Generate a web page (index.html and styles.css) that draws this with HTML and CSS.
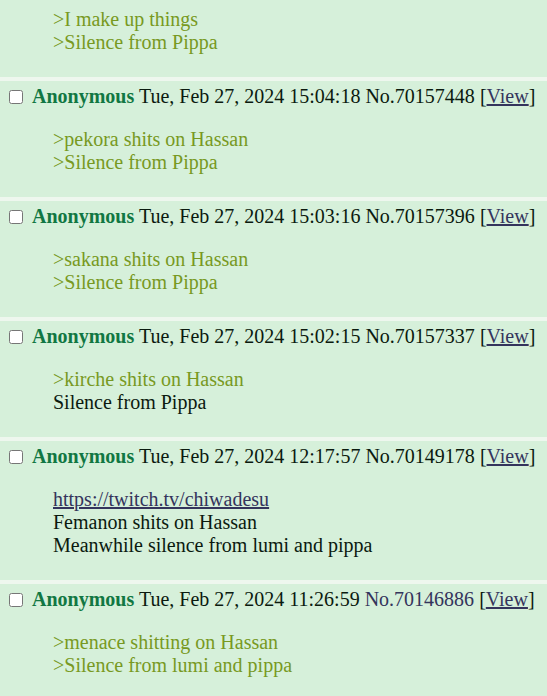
FILE: index.html
```html
<!DOCTYPE html>
<html lang="en">
<head>
  <meta charset="UTF-8">
  <title>Thread</title>
  <link rel="stylesheet" href="styles.css">
</head>
<body>
  <div class="thread">
    <!-- top post, cut off -->
    <div class="post post-first">
      <blockquote class="text">
        <span class="quote">&gt;I make up things</span><br>
        <span class="quote">&gt;Silence from Pippa</span>
      </blockquote>
    </div>

    <div class="post">
      <div class="post-info">
        <input type="checkbox">
        <span class="name">Anonymous</span> <span class="date">Tue, Feb 27, 2024 15:04:18</span> <span class="num">No.70157448</span> [<a href="#">View</a>]
      </div>
      <blockquote class="text">
        <span class="quote">&gt;pekora shits on Hassan</span><br>
        <span class="quote">&gt;Silence from Pippa</span>
      </blockquote>
    </div>

    <div class="post">
      <div class="post-info">
        <input type="checkbox">
        <span class="name">Anonymous</span> <span class="date">Tue, Feb 27, 2024 15:03:16</span> <span class="num">No.70157396</span> [<a href="#">View</a>]
      </div>
      <blockquote class="text">
        <span class="quote">&gt;sakana shits on Hassan</span><br>
        <span class="quote">&gt;Silence from Pippa</span>
      </blockquote>
    </div>

    <div class="post">
      <div class="post-info">
        <input type="checkbox">
        <span class="name">Anonymous</span> <span class="date">Tue, Feb 27, 2024 15:02:15</span> <span class="num">No.70157337</span> [<a href="#">View</a>]
      </div>
      <blockquote class="text">
        <span class="quote">&gt;kirche shits on Hassan</span><br>
        Silence from Pippa
      </blockquote>
    </div>

    <div class="post">
      <div class="post-info">
        <input type="checkbox">
        <span class="name">Anonymous</span> <span class="date">Tue, Feb 27, 2024 12:17:57</span> <span class="num">No.70149178</span> [<a href="#">View</a>]
      </div>
      <blockquote class="text">
        <a href="#">https://twitch.tv/chiwadesu</a><br>
        Femanon shits on Hassan<br>
        Meanwhile silence from lumi and pippa
      </blockquote>
    </div>

    <div class="post">
      <div class="post-info">
        <input type="checkbox">
        <span class="name">Anonymous</span> <span class="date">Tue, Feb 27, 2024 11:26:59</span> <span class="num num-link">No.70146886</span> [<a href="#">View</a>]
      </div>
      <blockquote class="text">
        <span class="quote">&gt;menace shitting on Hassan</span><br>
        <span class="quote">&gt;Silence from lumi and pippa</span>
      </blockquote>
    </div>
  </div>
</body>
</html>
```

FILE: styles.css
```css
body {
  margin: 0;
  background-color: #eef7ee;
  font-family: "Liberation Serif", "Times New Roman", serif;
  font-size: 20px;
  color: #0b1a0f;
}

.thread {
  display: flex;
  flex-direction: column;
  gap: 4px;
}

.post {
  background-color: #d6f0da;
  padding: 4px 0 23px;
}

.post-first {
  padding-top: 8px;
}

.post-info {
  padding-left: 8px;
  white-space: nowrap;
}

.post-info input {
  width: 14px;
  height: 14px;
  margin: 0 4px 0 1px;
  vertical-align: -1px;
}

.name {
  color: #117743;
  font-weight: bold;
}

.num-link {
  color: #34345c;
}

a {
  color: #34345c;
}

.text {
  margin: 20px 0 0 53px;
}

.post-first .text {
  margin-top: 0;
}

.quote {
  color: #789922;
}
```
